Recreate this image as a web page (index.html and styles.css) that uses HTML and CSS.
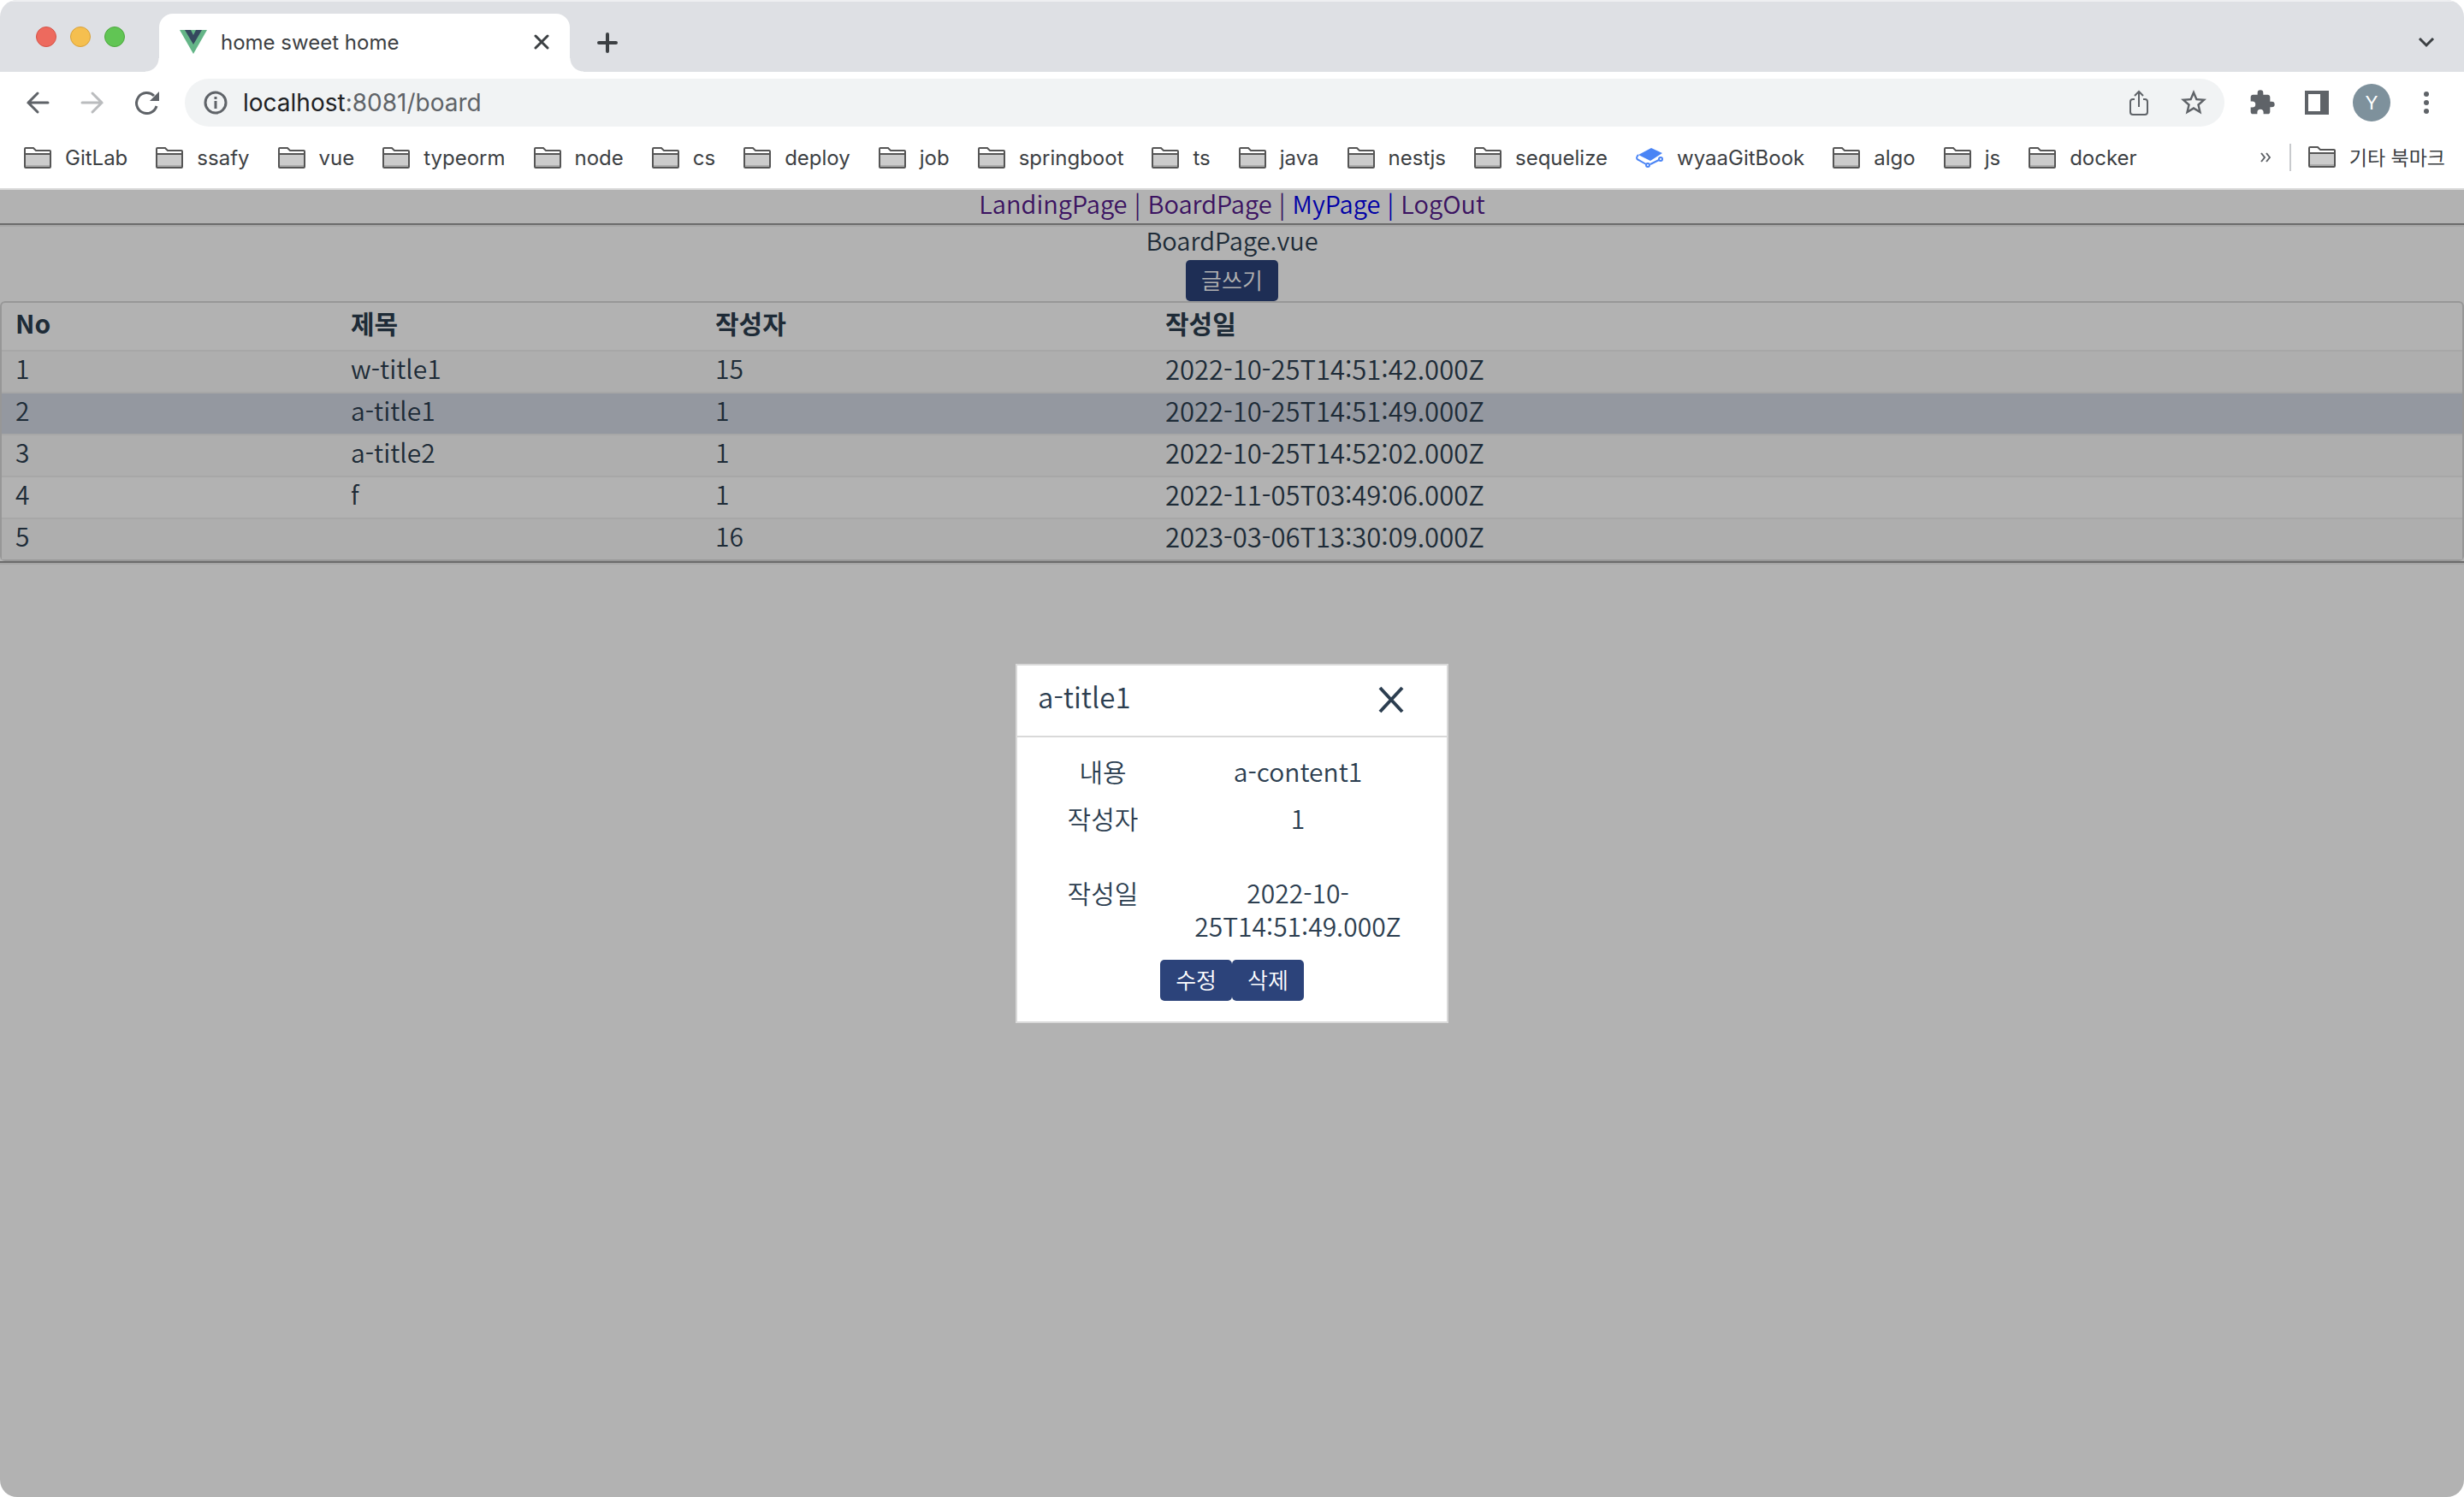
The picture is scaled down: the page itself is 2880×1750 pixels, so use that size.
FILE: index.html
```html
<!DOCTYPE html>
<html lang="ko">
<head>
<meta charset="utf-8">
<title>home sweet home</title>
<link rel="stylesheet" href="styles.css">
</head>
<body>
<svg class="defs" aria-hidden="true">
  <symbol id="folder" viewBox="0 0 32 25">
    <path d="M1 24V2q0-1 1-1h9l3 3h16q1 0 1 1v19z" fill="#fff"/>
    <path d="M1 8h30v16H1z" fill="#ccc"/>
    <path d="M1 21h30v3H1z" fill="#adadad"/>
    <path d="M1 8h30M1 23V2q0-1 1-1h9l3 3h16q1 0 1 1v18q0 1-1 1H2q-1 0-1-1z" fill="none" stroke="#555" stroke-width="2"/>
  </symbol>
</svg>
<div class="window">
  <header class="chrome">
    <div class="tabstrip">
      <div class="lights"><span class="light red"></span><span class="light yellow"></span><span class="light green"></span></div>
      <div class="tab">
        <svg class="vue" viewBox="0 0 32 28"><path d="M0 0h32L16 28z" fill="#64b587"/><path d="M6 0h7l3 6 3-6h7L16 17z" fill="#35495e"/></svg>
        <span class="tab-title">home sweet home</span>
        <button class="icon-btn tab-close" aria-label="Close tab"><svg width="18" height="18" viewBox="0 0 18 18"><path d="M2 2l14 14M16 2L2 16" stroke="#3c4043" stroke-width="3" stroke-linecap="round"/></svg></button>
      </div>
      <button class="icon-btn new-tab" aria-label="New tab"><svg width="24" height="24" viewBox="0 0 24 24"><path d="M12 2v20M2 12h20" stroke="#3c4043" stroke-width="4" stroke-linecap="round"/></svg></button>
      <button class="icon-btn tab-menu" aria-label="Search tabs"><svg width="20" height="12" viewBox="0 0 20 12"><path d="M2 1l8 8 8-8" fill="none" stroke="#3c4043" stroke-width="3"/></svg></button>
    </div>
    <div class="toolbar">
      <button class="icon-btn" aria-label="Back"><svg width="28" height="28" viewBox="0 0 28 28"><path d="M26 14H3M14 3L3 14l11 11" fill="none" stroke="#5f6368" stroke-width="3" stroke-linecap="round"/></svg></button>
      <button class="icon-btn" aria-label="Forward"><svg width="28" height="28" viewBox="0 0 28 28"><path d="M2 14h23M14 3l11 11-11 11" fill="none" stroke="#babcbe" stroke-width="3" stroke-linecap="round"/></svg></button>
      <button class="icon-btn" aria-label="Reload"><svg width="28" height="28" viewBox="0 0 28 28"><path d="M25 18A12 12 0 1 1 22 6" fill="none" stroke="#5f6368" stroke-width="3"/><path d="M28 1v11H17z" fill="#5f6368"/></svg></button>
      <div class="omnibox">
        <svg width="28" height="28" viewBox="0 0 28 28"><circle cx="14" cy="14" r="12" fill="none" stroke="#5f6368" stroke-width="3"/><path d="M14 12v9M14 7v3" stroke="#5f6368" stroke-width="3"/></svg>
        <span class="url"><b>localhost</b>:8081/board</span>
        <button class="icon-btn" aria-label="Share"><svg width="24" height="30" viewBox="0 0 24 30"><path d="M7 11H5q-3 0-3 3v12q0 3 3 3h14q3 0 3-3V14q0-3-3-3h-2M12 20V3M7 7l5-5 5 5" fill="none" stroke="#5f6368" stroke-width="2"/></svg></button>
        <button class="icon-btn" aria-label="Bookmark"><svg width="36" height="36" viewBox="0 0 24 24"><path d="M22 9.240l-7.190-.620L12 2 9.190 8.630 2 9.240l5.460 4.730L5.820 21 12 17.270 18.180 21l-1.630-7.030L22 9.240zM12 15.400l-3.760 2.270 1-4.280-3.320-2.880 4.380-.380L12 6.100l1.710 4.040 4.380.380-3.320 2.880 1 4.280L12 15.400z" fill="#5f6368"/></svg></button>
      </div>
      <button class="icon-btn" aria-label="Extensions"><svg width="32" height="32" viewBox="0 0 24 24"><path d="M20.500 11H19V7c0-1.100-.9-2-2-2h-4V3.500a2.500 2.500 0 0 0-5 0V5H4c-1.100 0-2 .9-2 2v3.800h1.500a2.700 2.700 0 0 1 0 5.400H2V20c0 1.100.9 2 2 2h3.800v-1.500a2.700 2.700 0 0 1 5.400 0V22H17c1.100 0 2-.9 2-2v-4h1.500a2.500 2.500 0 0 0 0-5z" fill="#5f6368"/></svg></button>
      <button class="icon-btn" aria-label="Side panel"><svg width="28" height="28" viewBox="0 0 28 28"><path d="M0 0h28v28H0zM4 4v20h14V4z" fill="#5f6368" fill-rule="evenodd"/></svg></button>
      <button class="avatar" aria-label="Profile">Y</button>
      <button class="icon-btn" aria-label="Menu"><svg width="8" height="26" viewBox="0 0 8 26"><g fill="#5f6368"><circle cx="4" cy="3" r="3"/><circle cx="4" cy="13" r="3"/><circle cx="4" cy="23" r="3"/></g></svg></button>
    </div>
    <nav class="bookmarks" aria-label="Bookmarks">
      <a href="#"><svg class="bm"><use href="#folder"/></svg>GitLab</a>
      <a href="#"><svg class="bm"><use href="#folder"/></svg>ssafy</a>
      <a href="#"><svg class="bm"><use href="#folder"/></svg>vue</a>
      <a href="#"><svg class="bm"><use href="#folder"/></svg>typeorm</a>
      <a href="#"><svg class="bm"><use href="#folder"/></svg>node</a>
      <a href="#"><svg class="bm"><use href="#folder"/></svg>cs</a>
      <a href="#"><svg class="bm"><use href="#folder"/></svg>deploy</a>
      <a href="#"><svg class="bm"><use href="#folder"/></svg>job</a>
      <a href="#"><svg class="bm"><use href="#folder"/></svg>springboot</a>
      <a href="#"><svg class="bm"><use href="#folder"/></svg>ts</a>
      <a href="#"><svg class="bm"><use href="#folder"/></svg>java</a>
      <a href="#"><svg class="bm"><use href="#folder"/></svg>nestjs</a>
      <a href="#"><svg class="bm"><use href="#folder"/></svg>sequelize</a>
      <a href="#"><svg class="bm" viewBox="0 0 32 25"><path d="M3 9L18 1l13 6-14 9z" fill="#4a84f5"/><path d="M3 9q-4 4 0 6l9 5M17 20l10-5" fill="none" stroke="#4a84f5" stroke-width="2"/><g fill="#fff" stroke="#4a84f5" stroke-width="2"><circle cx="14" cy="21" r="2"/><circle cx="29" cy="14" r="2"/></g></svg>wyaaGitBook</a>
      <a href="#"><svg class="bm"><use href="#folder"/></svg>algo</a>
      <a href="#"><svg class="bm"><use href="#folder"/></svg>js</a>
      <a href="#"><svg class="bm"><use href="#folder"/></svg>docker</a>
      <button class="icon-btn more" aria-label="More bookmarks"><svg width="12" height="12" viewBox="0 0 12 12"><path d="M1 1l4 5-4 5M7 1l4 5-4 5" fill="none" stroke="#5f6368" stroke-width="2"/></svg></button>
      <span class="sep"></span>
      <a href="#" class="other"><svg class="bm"><use href="#folder"/></svg>기타 북마크</a>
    </nav>
  </header>
  <main class="page">
    <nav class="links"><a href="#">LandingPage</a> <a href="#">|</a> <a href="#">BoardPage</a> <a href="#">|</a> <a href="#" class="new">MyPage</a> <a href="#" class="new">|</a> <a href="#">LogOut</a></nav>
    <hr>
    <p class="name">BoardPage.vue</p>
    <button class="btn">글쓰기</button>
    <table class="board">
      <colgroup><col class="c1"><col class="c2"><col class="c3"><col></colgroup>
      <thead><tr><th>No</th><th>제목</th><th>작성자</th><th>작성일</th></tr></thead>
      <tbody>
        <tr><td>1</td><td>w-title1</td><td>15</td><td>2022-10-25T14:51:42.000Z</td></tr>
        <tr class="active"><td>2</td><td>a-title1</td><td>1</td><td>2022-10-25T14:51:49.000Z</td></tr>
        <tr><td>3</td><td>a-title2</td><td>1</td><td>2022-10-25T14:52:02.000Z</td></tr>
        <tr><td>4</td><td>f</td><td>1</td><td>2022-11-05T03:49:06.000Z</td></tr>
        <tr><td>5</td><td></td><td>16</td><td>2023-03-06T13:30:09.000Z</td></tr>
      </tbody>
    </table>
    <hr>
    <div class="overlay">
      <section class="modal" role="dialog" aria-labelledby="modal-title">
        <header class="modal-head">
          <h2 id="modal-title">a-title1</h2>
          <button class="icon-btn" aria-label="Close"><svg width="30" height="32" viewBox="0 0 30 32"><path d="M2 2l26 28M28 2L2 30" stroke="#2c3e50" stroke-width="4"/></svg></button>
        </header>
        <dl class="fields">
          <dt>내용</dt><dd>a-content1</dd>
          <dt>작성자</dt><dd>1</dd>
          <dt class="date">작성일</dt><dd class="date">2022-10-25T14:51:49.000Z</dd>
        </dl>
        <div class="actions"><button class="btn">수정</button><button class="btn">삭제</button></div>
      </section>
    </div>
  </main>
</div>
</body>
</html>
```
FILE: styles.css
```css
* { box-sizing: border-box; }
html, body { height: 100%; margin: 0; }
body { background: #fff; font-family: "Noto Sans CJK KR", sans-serif; }
a { text-decoration: none; color: inherit; }
button { font-family: inherit; font-weight: inherit; cursor: pointer; }
svg { display: block; flex: none; }
.defs { position: absolute; width: 0; height: 0; }

.window { min-height: 100%; display: flex; flex-direction: column; border-radius: 20px; overflow: hidden; }
.chrome { font-family: Inter, "Noto Sans CJK KR", sans-serif; color: #3c4043; border-bottom: 2px solid #d9d9d9; background: #fff; }
.icon-btn { display: flex; align-items: center; justify-content: center; flex: none; padding: 0; border: 0; background: none; }

.tabstrip { display: flex; height: 84px; background: #dee0e4; border-top: 2px solid #eeeff1; }
.lights { display: flex; gap: 16px; width: 186px; padding: 29px 0 0 42px; }
.light { width: 24px; height: 24px; border-radius: 50%; border: 1px solid; }
.red { background: #ed6a5e; border-color: #d55448; }
.yellow { background: #f5bf4f; border-color: #d8a13a; }
.green { background: #61c554; border-color: #4ca73d; }
.tab { position: relative; display: flex; align-items: center; width: 480px; margin-top: 14px; padding: 0 24px 2px; background: #fff; border-radius: 16px 16px 0 0; }
.tab::before, .tab::after { content: ""; position: absolute; bottom: 0; width: 16px; height: 16px; }
.tab::before { right: 100%; background: radial-gradient(circle at 0 0, #dee0e4 15px, #fff 16px); }
.tab::after { left: 100%; background: radial-gradient(circle at 100% 0, #dee0e4 15px, #fff 16px); }
.vue { width: 32px; height: 28px; }
.tab-title { margin-left: 16px; font-size: 24px; }
.tab-close { margin-left: auto; }
.new-tab { margin-left: 32px; padding-top: 14px; }
.tab-menu { margin: 0 34px 0 auto; padding-top: 14px; }

.toolbar { display: flex; align-items: center; height: 72px; padding: 0 40px 0 30px; }
.toolbar > .icon-btn:nth-child(-n+2) { margin-right: 36px; }
.omnibox { flex: 1; display: flex; align-items: center; height: 56px; margin: 0 28px 0 30px; padding: 0 18px 0 22px; border-radius: 28px; background: #f1f3f4; }
.url { flex: 1; margin-left: 18px; font-size: 28px; color: #5f6368; }
.url b { font-weight: 400; color: #202124; }
.omnibox .icon-btn + .icon-btn { margin-left: 34px; }
.avatar { width: 44px; height: 44px; margin: 0 38px 0 28px; padding: 0; border: 0; border-radius: 50%; background: #7e919c; color: #fff; font-size: 22px; }
.omnibox + .icon-btn { margin-right: 34px; }

.bookmarks { display: flex; align-items: center; height: 64px; padding: 0 22px 8px 28px; font-size: 24px; }
.bookmarks a { display: flex; align-items: center; gap: 16px; margin-right: 33px; white-space: nowrap; }
.bm { width: 32px; height: 25px; }
.more { margin-left: auto; }
.sep { width: 2px; height: 32px; margin: 0 20px 0 22px; background: #c8cacd; }
.bookmarks .other { margin-right: 0; padding-bottom: 2px; font-size: 23px; }

.page { position: relative; flex: 1; color: #2c3e50; font-size: 30px; font-weight: 350; line-height: 39px; text-align: center; }
.links { height: 39px; font-size: 29px; line-height: 31px; color: #551a8b; }
.links .new { color: #0000ee; }
hr { margin: 0; border: 2px solid; border-color: #9a9a9a #eee #eee #9a9a9a; border-width: 2px 0; }
.name { margin: 0; height: 39px; font-size: 29px; line-height: 31px; }
.btn { height: 48px; padding: 0 18px 2px; border: 0; border-radius: 5px; background: #2c437a; color: #fff; font-size: 26px; line-height: 46px; vertical-align: top; }
.page > .btn { display: block; margin: 0 auto; }

.board { width: 100%; table-layout: fixed; border-collapse: separate; border-spacing: 0; border: 2px solid #d9d9d9; border-radius: 6px; text-align: left; }
.c1 { width: 392px; } .c2 { width: 426px; } .c3 { width: 526px; }
.board th, .board td { height: 49px; padding: 0 16px 8px; border-bottom: 2px solid #efefef; }
.board th { height: 57px; font-weight: 700; }
.board td:last-child { font-size: 31px; }
.board tr:last-child td { height: 47px; border-bottom: 0; }
.board tbody tr:nth-child(odd) { background: #f9f9f9; }
.board .active { background: #d5dae6; }

.overlay { position: absolute; inset: 0; display: flex; align-items: center; justify-content: center; background: rgba(0, 0, 0, .3); }
.modal { width: 506px; border: 2px solid #d9d9d9; background: #fff; }
.modal-head { display: flex; align-items: center; justify-content: space-between; height: 84px; padding: 0 50px 2px 24px; border-bottom: 2px solid #d9d9d9; }
.modal-head h2 { margin: 0; padding-bottom: 8px; font-size: 33px; font-weight: 350; }
.fields { display: grid; grid-template-columns: 152px 304px; margin: 0; padding: 20px 24px 0; row-gap: 16px; }
.fields dt, .fields dd { margin: 0; }
.fields .date { margin-top: 32px; }
.actions { display: flex; justify-content: center; padding: 20px 0 24px; }
```
